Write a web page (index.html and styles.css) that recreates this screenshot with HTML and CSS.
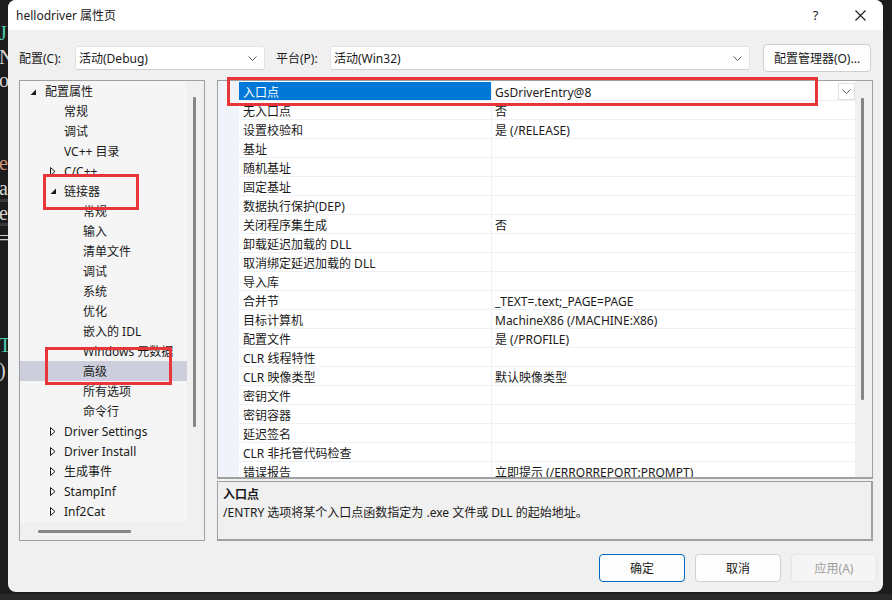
FILE: index.html
```html
<!DOCTYPE html>
<html lang="zh-CN">
<head>
<meta charset="utf-8">
<title>hellodriver 属性页</title>
<link rel="stylesheet" href="styles.css">
</head>
<body>
<div class="desk">
  <span class="code teal l1">J</span>
  <span class="code light l2">N</span>
  <span class="code light l3">o</span>
  <span class="code orange l4">e</span>
  <span class="code light l5">a</span>
  <span class="code light l6">e</span>
  <span class="code light l7">=</span>
  <span class="code teal l8">T</span>
  <span class="code light l9">)</span>
  <div class="band b1"></div>
  <div class="band b2"></div>
  <div class="bottom-band"></div>
</div>

<div class="dialog">
  <div class="titlebar">
    <span class="title">hellodriver 属性页</span>
    <div class="tb-btns">
      <span class="tb-btn help">?</span>
      <span class="tb-btn close"><svg width="11" height="11" viewBox="0 0 11 11"><path d="M0.5 0.5 L10.5 10.5 M10.5 0.5 L0.5 10.5" stroke="#1a1a1a" stroke-width="1.1" fill="none"/></svg></span>
    </div>
  </div>

  <div class="body">
    <div class="toolbar">
      <span class="lbl lbl1">配置(C):</span>
      <div class="combo combo1"><span>活动(Debug)</span><svg class="chev" width="9" height="5" viewBox="0 0 9 5"><path d="M0.5 0.5 L4.5 4.5 L8.5 0.5" stroke="#5a5a5a" fill="none"/></svg></div>
      <span class="lbl lbl2">平台(P):</span>
      <div class="combo combo2"><span>活动(Win32)</span><svg class="chev" width="9" height="5" viewBox="0 0 9 5"><path d="M0.5 0.5 L4.5 4.5 L8.5 0.5" stroke="#5a5a5a" fill="none"/></svg></div>
      <button class="btn mgr">配置管理器(O)...</button>
    </div>

    <div class="main">
      <div class="tree">
        <div class="tree-top">
          <ul class="tree-list">
            <li class="node lv0"><span class="arrow"><svg width="7" height="7" viewBox="0 0 7 7"><path d="M6 0.5 L6 6 L0.5 6 Z" fill="#1a1a1a"/></svg></span>配置属性</li>
            <li class="node lv1"><span class="arrow"></span>常规</li>
            <li class="node lv1"><span class="arrow"></span>调试</li>
            <li class="node lv1"><span class="arrow"></span>VC++ 目录</li>
            <li class="node lv1"><span class="arrow"><svg width="6" height="9" viewBox="0 0 6 9"><path d="M0.5 0.5 L5 4.5 L0.5 8.5 Z" stroke="#1a1a1a" fill="none"/></svg></span>C/C++</li>
            <li class="node lv1"><span class="arrow"><svg width="7" height="7" viewBox="0 0 7 7"><path d="M6 0.5 L6 6 L0.5 6 Z" fill="#1a1a1a"/></svg></span>链接器</li>
            <li class="node lv2"><span class="arrow"></span>常规</li>
            <li class="node lv2"><span class="arrow"></span>输入</li>
            <li class="node lv2"><span class="arrow"></span>清单文件</li>
            <li class="node lv2"><span class="arrow"></span>调试</li>
            <li class="node lv2"><span class="arrow"></span>系统</li>
            <li class="node lv2"><span class="arrow"></span>优化</li>
            <li class="node lv2"><span class="arrow"></span>嵌入的 IDL</li>
            <li class="node lv2"><span class="arrow"></span>Windows 元数据</li>
            <li class="node lv2 selected"><span class="arrow"></span>高级</li>
            <li class="node lv2"><span class="arrow"></span>所有选项</li>
            <li class="node lv2"><span class="arrow"></span>命令行</li>
            <li class="node lv1"><span class="arrow"><svg width="6" height="9" viewBox="0 0 6 9"><path d="M0.5 0.5 L5 4.5 L0.5 8.5 Z" stroke="#1a1a1a" fill="none"/></svg></span>Driver Settings</li>
            <li class="node lv1"><span class="arrow"><svg width="6" height="9" viewBox="0 0 6 9"><path d="M0.5 0.5 L5 4.5 L0.5 8.5 Z" stroke="#1a1a1a" fill="none"/></svg></span>Driver Install</li>
            <li class="node lv1"><span class="arrow"><svg width="6" height="9" viewBox="0 0 6 9"><path d="M0.5 0.5 L5 4.5 L0.5 8.5 Z" stroke="#1a1a1a" fill="none"/></svg></span>生成事件</li>
            <li class="node lv1"><span class="arrow"><svg width="6" height="9" viewBox="0 0 6 9"><path d="M0.5 0.5 L5 4.5 L0.5 8.5 Z" stroke="#1a1a1a" fill="none"/></svg></span>StampInf</li>
            <li class="node lv1"><span class="arrow"><svg width="6" height="9" viewBox="0 0 6 9"><path d="M0.5 0.5 L5 4.5 L0.5 8.5 Z" stroke="#1a1a1a" fill="none"/></svg></span>Inf2Cat</li>
          </ul>
          <div class="vscroll"><div class="vthumb tree-thumb"></div></div>
        </div>
        <div class="tree-bottom">
          <div class="hscroll"><div class="hthumb"></div></div>
          <div class="corner"></div>
        </div>
      </div>

      <div class="right">
        <div class="grid">
          <div class="gutter"></div>
          <div class="rows">
            <div class="row sel"><div class="name">入口点</div><div class="val">GsDriverEntry@8<span class="dd"><svg width="9" height="5" viewBox="0 0 9 5"><path d="M0.5 0.5 L4.5 4.5 L8.5 0.5" stroke="#5a5a5a" fill="none"/></svg></span></div></div>
            <div class="row"><div class="name">无入口点</div><div class="val">否</div></div>
            <div class="row"><div class="name">设置校验和</div><div class="val">是 (/RELEASE)</div></div>
            <div class="row"><div class="name">基址</div><div class="val"></div></div>
            <div class="row"><div class="name">随机基址</div><div class="val"></div></div>
            <div class="row"><div class="name">固定基址</div><div class="val"></div></div>
            <div class="row"><div class="name">数据执行保护(DEP)</div><div class="val"></div></div>
            <div class="row"><div class="name">关闭程序集生成</div><div class="val">否</div></div>
            <div class="row"><div class="name">卸载延迟加载的 DLL</div><div class="val"></div></div>
            <div class="row"><div class="name">取消绑定延迟加载的 DLL</div><div class="val"></div></div>
            <div class="row"><div class="name">导入库</div><div class="val"></div></div>
            <div class="row"><div class="name">合并节</div><div class="val">_TEXT=.text;_PAGE=PAGE</div></div>
            <div class="row"><div class="name">目标计算机</div><div class="val">MachineX86 (/MACHINE:X86)</div></div>
            <div class="row"><div class="name">配置文件</div><div class="val">是 (/PROFILE)</div></div>
            <div class="row"><div class="name">CLR 线程特性</div><div class="val"></div></div>
            <div class="row"><div class="name">CLR 映像类型</div><div class="val">默认映像类型</div></div>
            <div class="row"><div class="name">密钥文件</div><div class="val"></div></div>
            <div class="row"><div class="name">密钥容器</div><div class="val"></div></div>
            <div class="row"><div class="name">延迟签名</div><div class="val"></div></div>
            <div class="row"><div class="name">CLR 非托管代码检查</div><div class="val"></div></div>
            <div class="row"><div class="name">错误报告</div><div class="val">立即提示 (/ERRORREPORT:PROMPT)</div></div>
          </div>
          <div class="gscroll"><div class="vthumb grid-thumb"></div></div>
        </div>
        <div class="desc">
          <div class="desc-title">入口点</div>
          <div class="desc-text">/ENTRY 选项将某个入口点函数指定为 .exe 文件或 DLL 的起始地址。</div>
        </div>
      </div>
    </div>

    <div class="buttons">
      <button class="btn dlg default">确定</button>
      <button class="btn dlg">取消</button>
      <button class="btn dlg disabled">应用(A)</button>
    </div>
  </div>

  <div class="mark mark-linker"></div>
  <div class="mark mark-adv"></div>
  <div class="mark mark-entry"></div>
</div>
</body>
</html>
```

FILE: styles.css
```css
* { box-sizing: border-box; }
html, body { margin: 0; padding: 0; }
body {
  width: 892px;
  height: 600px;
  background: #1c1c1c;
  position: relative;
  overflow: hidden;
  font-family: "Noto Sans", "Noto Sans CJK SC", sans-serif;
  font-size: 12px;
  color: #1a1a1a;
}

/* desktop behind the dialog */
.desk { position: absolute; inset: 0; }
.code {
  position: absolute;
  left: -1px;
  font-family: "Liberation Serif", serif;
  font-size: 20px;
  line-height: 20px;
}
.teal { color: #4ec9b0; }
.light { color: #d4d4d4; }
.orange { color: #ce9178; }
.l1 { top: 23px; }
.l2 { top: 47px; }
.l3 { top: 70px; }
.l4 { top: 153px; }
.l5 { top: 178px; }
.l6 { top: 203px; }
.l7 { top: 228px; }
.l8 { top: 335px; }
.l9 { top: 360px; }
.band { position: absolute; left: 0; width: 10px; height: 3px; background: #3a3a3a; }
.b1 { top: 199px; }
.b2 { top: 223px; }
.bottom-band { position: absolute; left: 0; right: 0; top: 594px; height: 6px; background: #2a2a2a; }

/* dialog window */
.dialog {
  position: absolute;
  left: 8px;
  top: 0;
  width: 875px;
  height: 592px;
  background: #f0f0f0;
  border-radius: 8px;
  overflow: hidden;
  display: flex;
  flex-direction: column;
}

.titlebar {
  height: 30px;
  flex: none;
  background: #ffffff;
  display: flex;
  align-items: center;
  padding-left: 8px;
}
.title { font-size: 12px; line-height: 16px; padding-top: 2px; }
.tb-btns { margin-left: auto; display: flex; height: 30px; }
.tb-btn {
  width: 45px;
  height: 30px;
  display: flex;
  align-items: center;
  justify-content: center;
}
.help { font-size: 13px; padding-bottom: 1px; }

.body {
  flex: 1;
  display: flex;
  flex-direction: column;
  padding: 14px 0 0 11px;
}

.toolbar {
  display: flex;
  align-items: center;
  height: 28px;
}
.lbl { line-height: 16px; padding-top: 1px; }
.lbl1 { width: 56px; }
.lbl2 { width: 54px; margin-left: 11px; }
.combo {
  height: 24px;
  background: #ffffff;
  border: 1px solid #e3e3e3;
  border-bottom-color: #cfcfcf;
  border-radius: 3px;
  display: flex;
  align-items: center;
  padding: 1px 7px 0 3px;
  line-height: 16px;
}
.combo .chev { margin-left: auto; }
.combo1 { width: 190px; }
.combo2 { width: 420px; }

.btn {
  font-family: inherit;
  font-size: 12px;
  color: #1a1a1a;
  background: #fdfdfd;
  border: 1px solid #d0d0d0;
  border-radius: 4px;
  padding: 1px 0 0;
  line-height: 16px;
}
.mgr { width: 108px; height: 28px; margin-left: 13px; }

.main {
  display: flex;
  margin-top: 8px;
  height: 461px;
  gap: 12px;
}

/* tree */
.tree {
  width: 186px;
  border: 1px solid #a0a0a0;
  display: flex;
  flex-direction: column;
  background: #f0f0f0;
}
.tree-top { display: flex; height: 441px; }
.tree-list {
  list-style: none;
  margin: 0;
  padding: 0;
  width: 167px;
  background: #f5f5f5;
}
.node {
  height: 20px;
  display: flex;
  align-items: center;
  line-height: 16px;
  padding-top: 2px;
  white-space: nowrap;
  overflow: hidden;
}
.node.selected { background: #cccedb; }
.arrow {
  width: 15px;
  flex: none;
  display: flex;
  align-items: center;
}
.lv0 { padding-left: 10px; }
.lv0 .arrow svg { margin-top: 1px; }
.lv1 { padding-left: 29px; }
.lv1 .arrow svg { margin-left: 1px; margin-top: -1px; }
.lv2 { padding-left: 48px; }

.vscroll { width: 16px; position: relative; background: #f0f0f0; }
.vthumb { position: absolute; width: 3px; background: #868686; border-radius: 1px; }
.tree-thumb { left: 6px; top: 16px; height: 330px; }

.tree-bottom { display: flex; height: 18px; }
.hscroll { width: 167px; position: relative; background: #f0f0f0; }
.hthumb { position: absolute; left: 18px; top: 8px; width: 93px; height: 3px; background: #868686; border-radius: 1px; }
.corner { width: 16px; background: #f0f0f0; }

/* right side */
.right { width: 656px; display: flex; flex-direction: column; gap: 2px; }
.grid {
  height: 399px;
  border: 1px solid #a0a0a0;
  border-bottom-width: 2px;
  display: flex;
  background: #ffffff;
  overflow: hidden;
}
.gutter { width: 21px; flex: none; background: #f0f3f9; }
.rows { width: 616px; flex: none; padding-top: 1px; }
.row {
  height: 19px;
  display: flex;
  border-bottom: 1px solid #edf0f5;
  line-height: 16px;
}
.name {
  width: 253px;
  flex: none;
  padding: 3px 0 0 4px;
  border-right: 1px solid #edf0f5;
  display: flex;
  align-items: center;
  white-space: nowrap;
}
.val {
  flex: 1;
  padding: 3px 0 0 3px;
  display: flex;
  align-items: center;
  white-space: nowrap;
}
.row.sel .name { background: #0078d7; color: #ffffff; }
.dd {
  margin-left: auto;
  margin-top: -3px;
  width: 17px;
  height: 17px;
  border: 1px solid #e0e0e0;
  background: #ffffff;
  display: flex;
  align-items: center;
  justify-content: center;
}
.gscroll { width: 17px; flex: none; position: relative; background: #f0f0f0; }
.grid-thumb { left: 6px; top: 17px; height: 302px; }

.desc {
  height: 60px;
  border: 1px solid #a0a0a0;
  border-bottom-width: 2px;
  border-right-width: 2px;
  background: #f0f0f0;
  padding: 4px 5px 0;
  line-height: 18px;
}
.desc-title { font-weight: bold; }

/* bottom buttons */
.buttons {
  display: flex;
  justify-content: flex-end;
  gap: 10px;
  margin-top: 13px;
  padding-right: 6px;
}
.dlg { width: 86px; height: 28px; }
.default { border-color: #0067c0; }
.disabled { color: #9d9d9d; background: #f5f5f5; border-color: #e5e5e5; }

/* red annotation boxes */
.mark { position: absolute; border: 3px solid #e8353a; }
.mark-linker { left: 35px; top: 174px; width: 96px; height: 36px; }
.mark-adv { left: 37px; top: 347px; width: 127px; height: 38px; }
.mark-entry { left: 219px; top: 77px; width: 591px; height: 29px; }
```
